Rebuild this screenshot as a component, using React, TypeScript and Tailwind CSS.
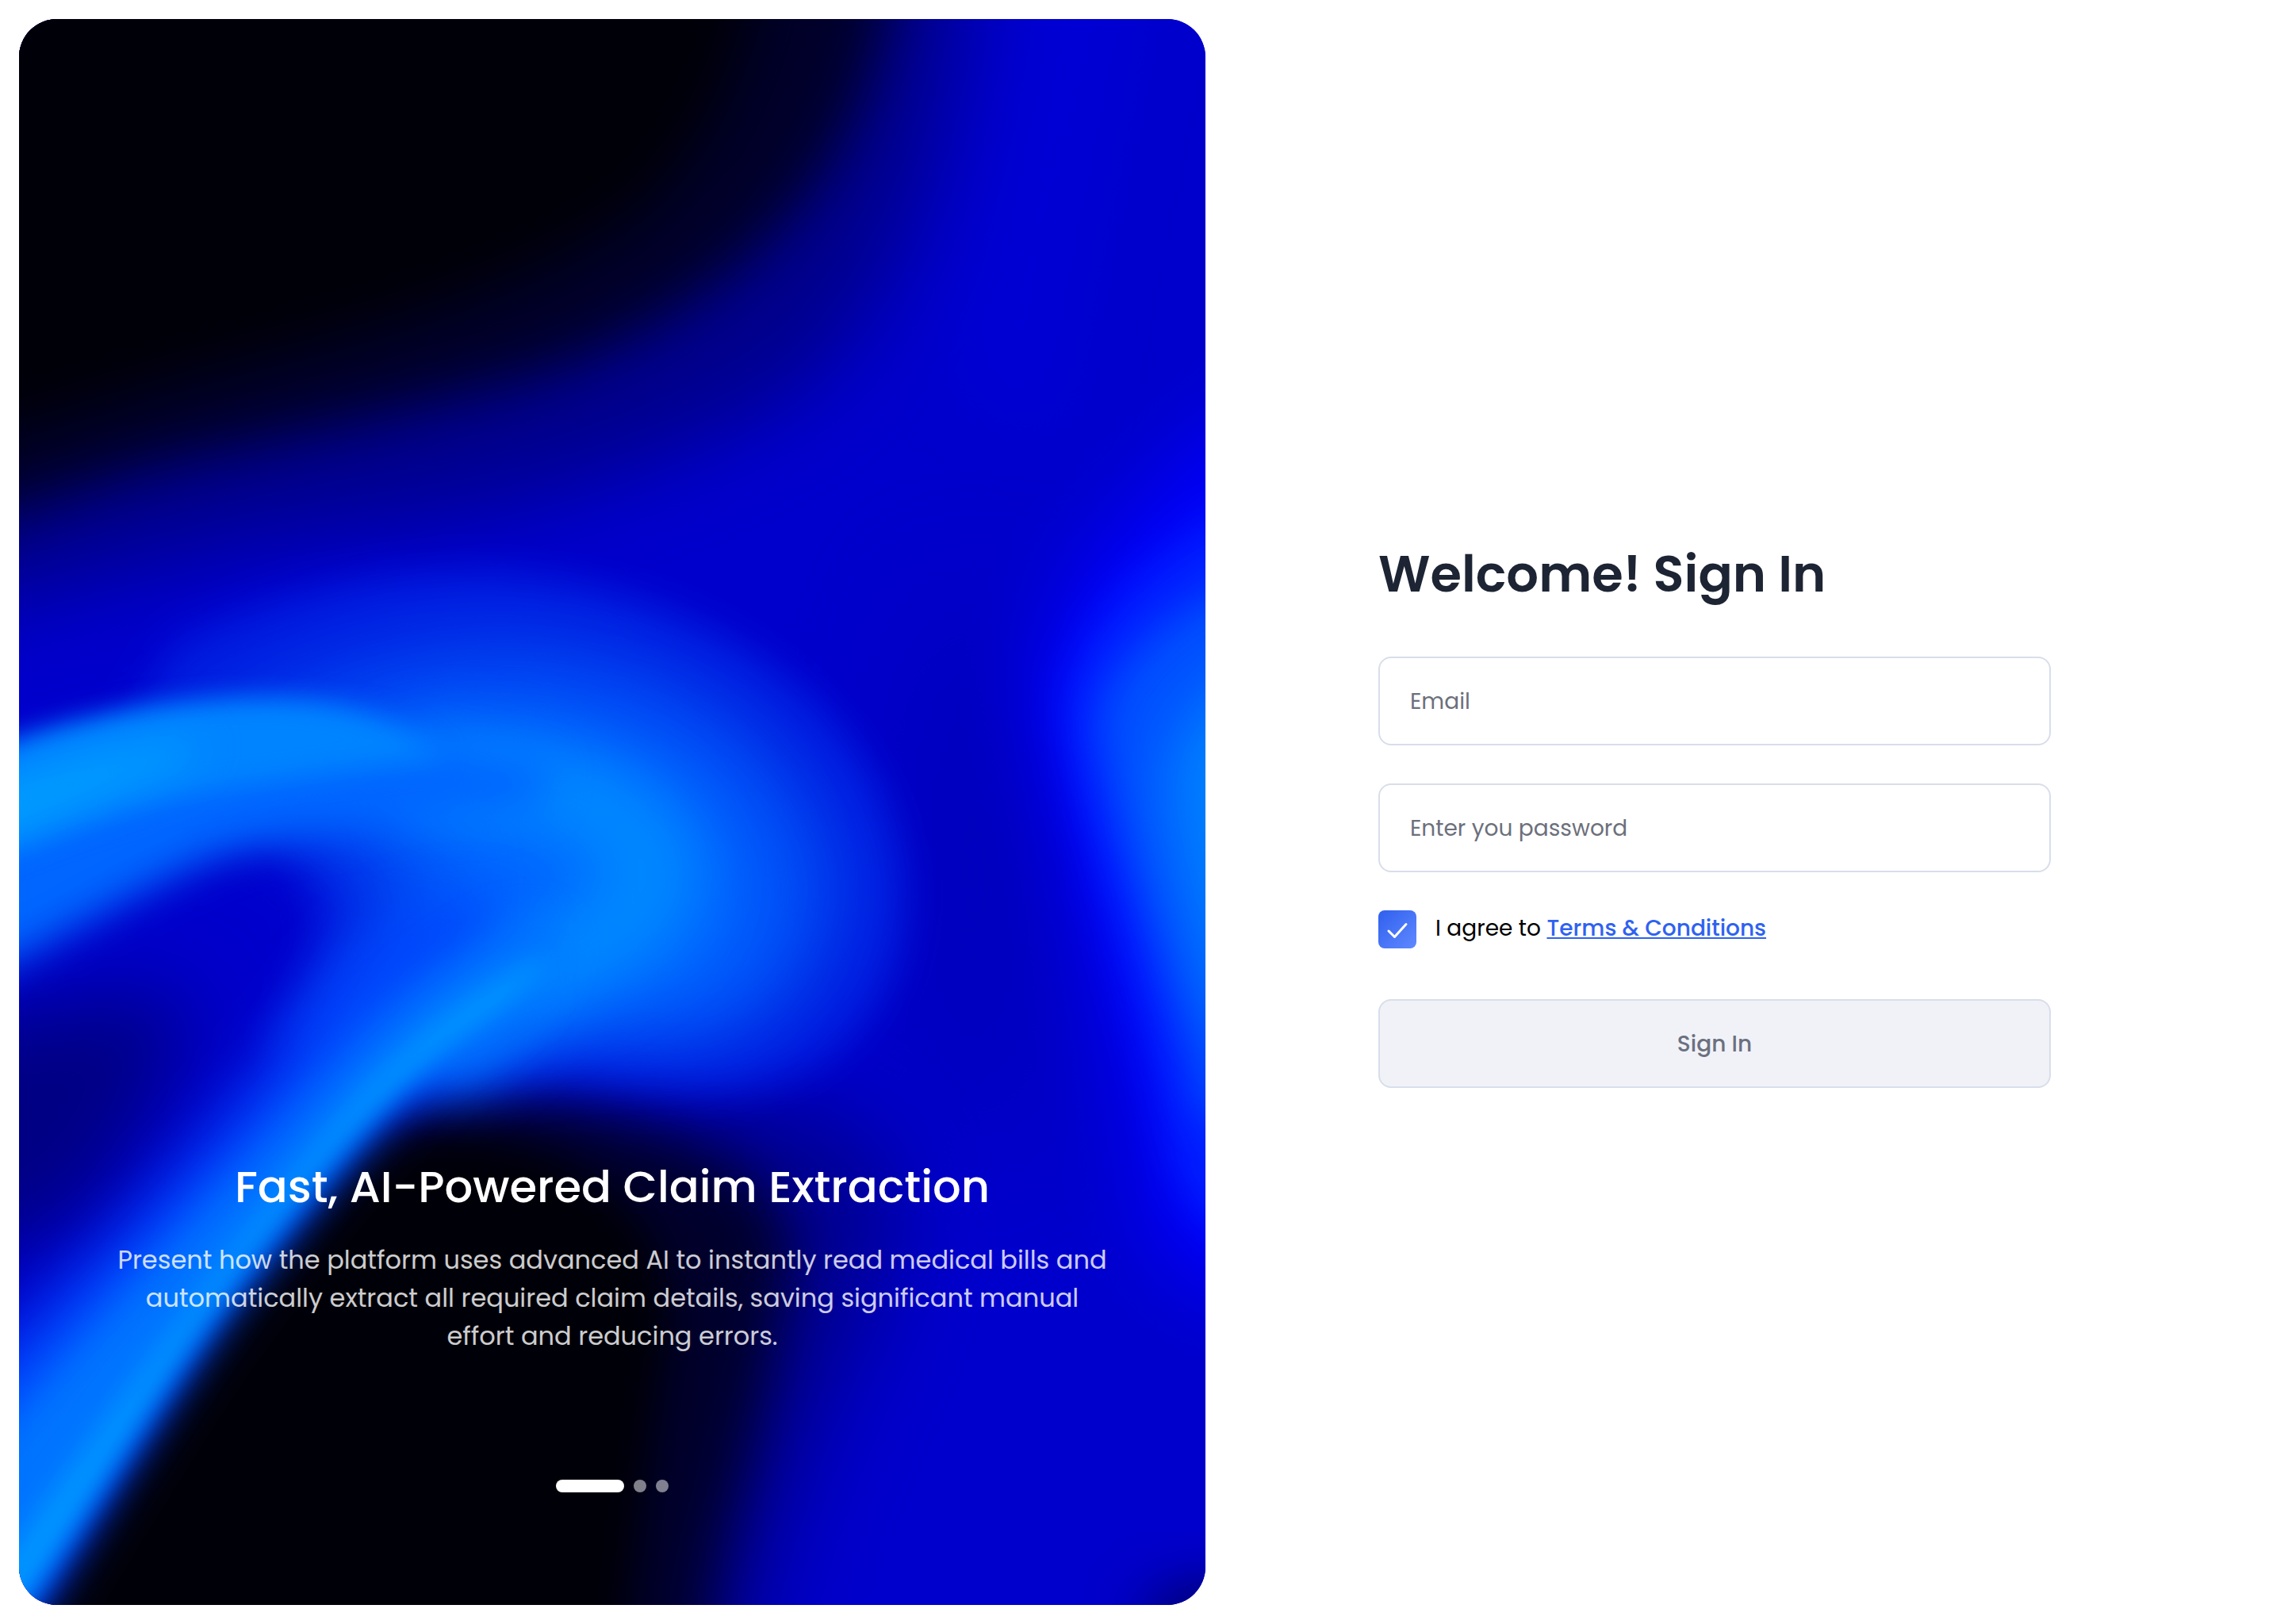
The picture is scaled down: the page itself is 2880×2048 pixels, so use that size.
import { useState } from "react";

function Blur({ id, amount }: { id: string; amount: number }) {
  return (
    <filter id={id} x="-100%" y="-100%" width="300%" height="300%" colorInterpolationFilters="sRGB">
      <feGaussianBlur stdDeviation={amount} />
    </filter>
  );
}

function WaveArtwork() {
  return (
    <svg
      className="absolute inset-0 h-full w-full"
      viewBox="13 13 815 1089"
      preserveAspectRatio="none"
      aria-hidden="true"
    >
      <defs>
        <Blur id="b9" amount={9} />
        <Blur id="b14" amount={14} />
        <Blur id="b20" amount={20} />
        <Blur id="b28" amount={28} />
        <Blur id="b40" amount={40} />
      </defs>
      <rect x="-100" y="-100" width="1050" height="1320" fill="#0000cc" />

      {/* soft tonal variation of the blue field */}
      <path d="M710 -40 L780 -40 C760 120 720 220 730 300 L660 260 C680 180 700 80 710 -40Z" fill="#0000d6" filter="url(#b28)" />
      <ellipse cx="670" cy="600" rx="50" ry="190" fill="#0000bc" filter="url(#b40)" />

      {/* black upper left */}
      <path d="M-200 -200 L670 -200 C676 60 635 190 550 268 C430 338 320 355 200 368 C110 385 30 410 -200 460Z" fill="#00008c" filter="url(#b28)" />
      <path d="M-200 -200 L632 -200 C627 50 575 120 515 176 C450 230 385 256 330 268 C225 296 150 308 91 324 C40 340 0 356 -200 418Z" fill="#00002a" filter="url(#b20)" />
      <path d="M-200 -200 L545 -200 C530 40 490 95 440 145 C350 205 260 225 120 262 C60 280 0 300 -200 350Z" fill="#000008" filter="url(#b20)" />

      {/* black lower centre */}
      <path d="M100 1250 L300 760 C380 745 500 735 570 765 C640 790 620 860 600 910 C575 960 555 1010 540 1060 C525 1110 510 1180 505 1250Z" fill="#000094" filter="url(#b28)" />
      <path d="M-60 1250 L160 890 L250 770 C300 745 370 750 430 770 C530 795 555 840 540 890 C528 950 516 1000 498 1060 C488 1100 480 1180 474 1250Z" fill="#00002c" filter="url(#b20)" />
      <path d="M-60 1250 L160 890 L255 790 C300 772 360 780 400 805 C450 835 470 880 455 940 C445 1010 435 1080 415 1250Z" fill="#000008" filter="url(#b14)" />

      {/* dark pocket on the left edge */}
      <path d="M-60 700 C0 700 110 670 130 690 C120 740 90 800 50 840 L-60 880Z" fill="#000084" filter="url(#b28)" />

      {/* glow of the hook */}
      <path d="M120 440 C190 405 265 390 346 394 C430 402 510 434 564 486 C616 540 628 600 618 650 C602 712 552 748 490 748 C430 744 395 726 350 735 L180 720 C215 670 230 640 215 600 C190 575 130 540 60 540Z" fill="#001ade" filter="url(#b14)" />
      <path d="M140 500 C230 440 340 424 410 444 C490 464 555 520 580 590 C588 655 545 710 480 718 C420 722 380 706 330 725 L210 720 C245 680 265 640 250 605 C230 580 200 560 140 550Z" fill="#0048f4" filter="url(#b28)" />
      <path d="M230 520 C320 475 430 486 490 534 C545 590 540 660 480 694 C420 706 370 696 320 722 L250 715 C280 680 305 640 305 605 C300 575 280 560 230 555Z" fill="#0066ff" filter="url(#b28)" />
      <path d="M280 535 C370 528 440 555 450 598 C445 650 380 640 290 728" fill="none" stroke="#0088ff" strokeWidth="62" filter="url(#b20)" />

      {/* band sweeping in from the left */}
      <path d="M-60 540 C40 505 120 490 200 496 C270 504 320 516 380 526 L370 552 C290 568 220 562 160 584 C100 606 40 648 -60 694Z" fill="#0066ff" filter="url(#b14)" />
      <path d="M-60 542 C20 498 100 480 180 480 C240 480 275 496 305 520 C240 530 170 536 105 552 C60 562 10 586 -60 608Z" fill="#0084ff" filter="url(#b9)" />
      <path d="M-60 570 C0 535 80 514 140 510 C130 526 90 534 60 548 C10 566 -20 580 -60 602Z" fill="#00a2ff" filter="url(#b14)" />

      {/* diagonal beam */}
      <path d="M-60 980 C60 870 150 780 215 690 C250 640 300 610 350 630 L350 695 C260 745 200 830 140 910 C90 985 50 1050 10 1120 L-60 1180Z" fill="#0044fc" filter="url(#b20)" />
      <path d="M-60 1050 C40 930 120 850 200 765 C255 700 305 650 365 632 C395 645 380 678 345 700 C283 732 235 790 180 860 C120 935 80 1005 24 1088 L-40 1180Z" fill="#0074ff" filter="url(#b14)" />
      <path d="M-60 1160 C60 990 130 890 205 800 C250 742 300 690 375 655 C385 665 350 690 318 712 C262 748 222 803 170 866 C116 940 75 1010 26 1086 L0 1120Z" fill="#0096ff" filter="url(#b9)" />

      {/* right edge flare */}
      <path d="M900 250 C790 320 715 400 710 480 C730 580 775 720 790 850 C800 880 850 900 900 900Z" fill="#0000fa" filter="url(#b28)" />
      <path d="M920 315 C800 365 740 420 730 485 C736 560 778 660 802 780 C812 840 850 860 920 870Z" fill="#0020ff" filter="url(#b14)" />
      <path d="M920 365 C830 405 760 440 754 500 C764 570 803 660 825 760 L920 820Z" fill="#0050ff" filter="url(#b14)" />
      <path d="M920 430 C840 460 805 490 800 540 C805 590 825 650 840 700 L920 740Z" fill="#0080ff" filter="url(#b20)" />

      <ellipse cx="835" cy="1112" rx="50" ry="20" fill="#000050" filter="url(#b20)" />
    </svg>
  );
}

function PromoPanel() {
  const [slide, setSlide] = useState(0);
  return (
    <section className="relative flex flex-none basis-[1496px] flex-col items-center justify-end overflow-hidden rounded-[48px] bg-[#0000cc] px-[120px] pb-[142px] text-center">
      <WaveArtwork />
      <h2 className="relative text-[56px] leading-[84px] font-medium text-white">
        Fast, AI-Powered Claim Extraction
      </h2>
      <p className="relative mt-[26px] text-[32px] leading-[48px] text-white/80">
        Present how the platform uses advanced AI to instantly read medical bills and automatically extract all required
        claim details, saving significant manual effort and reducing errors.
      </p>
      <div className="relative mt-[157px] flex gap-3">
        {[0, 1, 2].map((i) => (
          <button
            key={i}
            type="button"
            aria-label={`Slide ${i + 1}`}
            onClick={() => setSlide(i)}
            className={i === slide ? "h-4 w-[86px] rounded-full bg-white" : "size-4 rounded-full bg-white/50"}
          />
        ))}
      </div>
    </section>
  );
}

function SignInForm() {
  const field =
    "h-28 w-full rounded-2xl border-2 border-[#d8deea] bg-white px-[38px] pt-0.5 text-[28px] text-[#1d2433] outline-none placeholder:text-[#6c707c] placeholder:opacity-100";
  return (
    <form className="flex w-full max-w-[848px] flex-col" onSubmit={(e) => e.preventDefault()}>
      <h1 className="text-[64px] leading-[96px] font-semibold whitespace-nowrap text-[#1d2433]">Welcome! Sign In</h1>
      <div className="mt-14 flex flex-col gap-12">
        <input type="email" aria-label="Email" placeholder="Email" className={field} />
        <input type="password" aria-label="Password" placeholder="Enter you password" className={field} />
        <div className="flex items-start gap-6">
          <span className="relative size-12">
            <input
              id="terms"
              type="checkbox"
              defaultChecked
              className="peer block size-12 appearance-none rounded-lg border-2 border-[#d8deea] bg-white checked:border-0 checked:bg-linear-to-br checked:from-[#2f5fee] checked:to-[#6089ff]"
            />
            <svg
              viewBox="0 0 48 48"
              className="pointer-events-none absolute inset-0 hidden size-12 peer-checked:block"
              fill="none"
              stroke="white"
              strokeWidth="3"
              strokeLinecap="round"
              strokeLinejoin="round"
              aria-hidden="true"
            >
              <path d="M13 26 L20.500 33.500 L35 17.500" />
            </svg>
          </span>
          <label htmlFor="terms" className="text-[28px] leading-[46px] text-black">
            I agree to{" "}
            <a href="#terms" className="font-medium text-[#2f62f0] underline">
              Terms &amp; Conditions
            </a>
          </label>
        </div>
      </div>
      <button
        type="submit"
        className="mt-16 h-28 rounded-2xl border-2 border-[#d8deea] bg-[#f1f2f8] pt-0.5 text-[28px] font-medium text-[#6b7080]"
      >
        Sign In
      </button>
    </form>
  );
}

export default function App() {
  return (
    <main className="flex min-h-screen bg-white py-6 pl-6 font-['Poppins',sans-serif]">
      <PromoPanel />
      <div className="flex flex-1 items-center justify-center pr-[76px]">
        <SignInForm />
      </div>
    </main>
  );
}
